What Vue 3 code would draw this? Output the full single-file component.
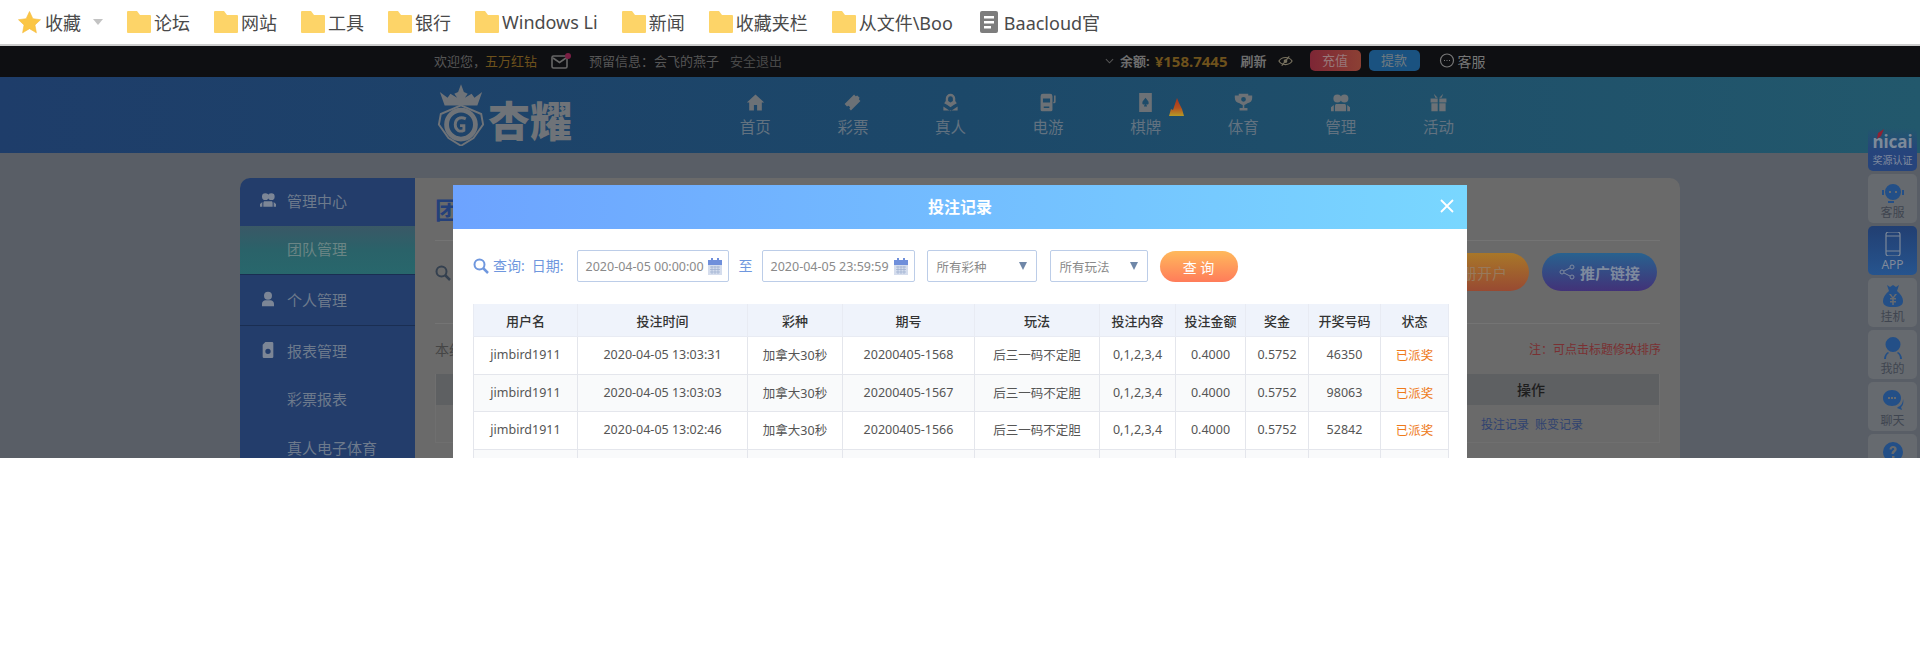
<script setup>
const bookmarks = [
  { label: '论坛' }, { label: '网站' }, { label: '工具' }, { label: '银行' },
  { label: 'Windows Li' }, { label: '新闻' }, { label: '收藏夹栏' }, { label: '从文件\\Boo' },
];

const navItems = [
  { label: '首页', icon: 'home' }, { label: '彩票', icon: 'ticket' },
  { label: '真人', icon: 'live' }, { label: '电游', icon: 'slot' },
  { label: '棋牌', icon: 'card', hot: true }, { label: '体育', icon: 'trophy' },
  { label: '管理', icon: 'team' }, { label: '活动', icon: 'gift' },
];

const sideMenu = [
  { label: '管理中心', icon: 'team', cls: 'h48' },
  { label: '团队管理', cls: 'active' },
  { label: '个人管理', icon: 'user', cls: 'h51 line' },
  { label: '报表管理', icon: 'doc', cls: 'h50' },
  { label: '彩票报表', cls: 'h47' },
  { label: '真人电子体育', cls: 'h50' },
];

const columns = [
  { label: '用户名', width: 104 }, { label: '投注时间', width: 170 },
  { label: '彩种', width: 95 }, { label: '期号', width: 132 },
  { label: '玩法', width: 125 }, { label: '投注内容', width: 76 },
  { label: '投注金额', width: 70 }, { label: '奖金', width: 63 },
  { label: '开奖号码', width: 72 }, { label: '状态', width: 68 },
];

const rows = [
  ['jimbird1911', '2020-04-05 13:03:31', '加拿大30秒', '20200405-1568', '后三一码不定胆', '0,1,2,3,4', '0.4000', '0.5752', '46350', '已派奖'],
  ['jimbird1911', '2020-04-05 13:03:03', '加拿大30秒', '20200405-1567', '后三一码不定胆', '0,1,2,3,4', '0.4000', '0.5752', '98063', '已派奖'],
  ['jimbird1911', '2020-04-05 13:02:46', '加拿大30秒', '20200405-1566', '后三一码不定胆', '0,1,2,3,4', '0.4000', '0.5752', '52842', '已派奖'],
  ['', '', '', '', '', '', '', '', '', ''],
];

const dock = [
  { label: '客服', icon: 'agent' }, { label: 'APP', icon: 'phone', blue: true },
  { label: '挂机', icon: 'bag' }, { label: '我的', icon: 'me' },
  { label: '聊天', icon: 'chat' }, { label: '', icon: 'help' },
];
</script>

<template>
  <div class="app">
    <div class="bookmarks">
      <span class="bm first">
        <svg class="star" viewBox="0 0 24 24"><path d="M12 0.500l3.500 7.500 8 1.100-5.800 5.500 1.500 8.200L12 18.400l-7.200 4.400 1.500-8.200L.5 9.100l8-1.100z" stroke="#f5b93a" stroke-width=".6" stroke-linejoin="round" /></svg>
        收藏
        <i class="caret"></i>
      </span>
      <span v-for="b in bookmarks" :key="b.label" class="bm">
        <svg class="folder" viewBox="0 0 24 22"><path d="M1 0h9l3 4h10a1 1 0 0 1 1 1v16a1 1 0 0 1-1 1H1a1 1 0 0 1-1-1V1a1 1 0 0 1 1-1z" /></svg>
        {{ b.label }}
      </span>
      <span class="bm doc">
        <svg class="docicon" viewBox="0 0 18 22"><rect width="18" height="22" rx="2" fill="#7d7d7d" /><path d="M4 5h10v2.500H4zM4 10h10v2.500H4zM4 15h7v2.500H4z" fill="#fff" /></svg>
        Baacloud官
      </span>
    </div>

    <div class="page">
      <div class="topbar">
        <span>欢迎您，</span><span class="gold name">五万红钻</span>
        <svg class="mail" viewBox="0 0 20 16"><rect x="1" y="3" width="15" height="12" rx="1.500" fill="none" stroke="#666" stroke-width="1.600" /><path d="M2 5l6.500 4.500L15 5" fill="none" stroke="#666" stroke-width="1.600" /><circle cx="17" cy="3" r="3" fill="#7a1f44" /></svg>
        <span class="reserve">预留信息：</span><span>会飞的燕子</span>
        <span class="logout">安全退出</span>
        <div class="top-right">
          <svg class="chev" viewBox="0 0 10 6"><path d="M1 1l4 4 4-4" fill="none" stroke="#555" stroke-width="1.200" /></svg>
          <b class="bal">余额:</b>
          <b class="gold money">¥158.7445</b>
          <b class="bal refresh">刷新</b>
          <svg class="eye" viewBox="0 0 16 12"><path d="M1 6c3-5 11-5 14 0-3 5-11 5-14 0z" fill="none" stroke="#77715f" stroke-width="1.300" /><circle cx="8" cy="6" r="2" fill="#77715f" /><path d="M12 1L4 11" stroke="#77715f" stroke-width="1.300" /></svg>
          <span class="pill red">充值</span>
          <span class="pill blue">提款</span>
          <svg class="chat" viewBox="0 0 16 16"><circle cx="8" cy="7.500" r="6.500" fill="none" stroke="#777" stroke-width="1.200" /><path d="M5 7.500h1M7.500 7.500h1M10 7.500h1" stroke="#777" stroke-width="1.200" /></svg>
          <span class="service">客服</span>
        </div>
      </div>

      <div class="header">
        <div class="logo">
          <svg class="crest" viewBox="0 0 52 64">
            <path d="M26 0l3 8 4 2-3 4 7-4 3 4 8-6-5 14H9L4 8l8 6 3-4 7 4-3-4 4-2z" />
            <path d="M26 22l21 9 2 11-10 14-13 8-13-8L3 42l2-11z" fill="none" stroke-width="2" />
            <circle cx="26" cy="42" r="15" fill="none" stroke-width="5" />
            <path d="M31 36c-6-3-11 0-11 6s5 8 9 6v-5h-4" fill="none" stroke-width="3" />
          </svg>
          <span class="logo-text">杏耀</span>
        </div>
        <nav class="nav">
          <a v-for="n in navItems" :key="n.label" class="nav-item">
            <svg class="nav-icon" viewBox="0 0 24 24">
              <path v-if="n.icon === 'home'" d="M12 2l11 10h-3v10h-6v-7h-4v7H4V12H1z" />
              <path v-else-if="n.icon === 'ticket'" d="M14 2l2 2 2-1 3 3-1 2 2 2-12 12-2-2 1-2-2-2-2 1-3-3z" />
              <path v-else-if="n.icon === 'live'" fill-rule="evenodd" d="M12 1a6 6 0 0 1 6 6v3l2 3-4 2-4 3-4-3-4-2 2-3V7a6 6 0 0 1 6-6zm0 3a3 3 0 0 0-3 3v3l3 2 3-2V7a3 3 0 0 0-3-3zM3 17l9 6 9-6v5H3z" />
              <path v-else-if="n.icon === 'slot'" fill-rule="evenodd" d="M5 1h9a3 3 0 0 1 3 3v17a2 2 0 0 1-2 2H4a2 2 0 0 1-2-2V4a3 3 0 0 1 3-3zm0 6v5h9V7zm1 10v2h7v-2zM19 3h2v8a2 2 0 0 1-2 2h-1v-2h1z" />
              <path v-else-if="n.icon === 'card'" fill-rule="evenodd" d="M4 0h16v24H4zm8 6c-2 3-4 4-4 6.500 0 2 2 2.500 3 1.500l-1 3h4l-1-3c1 1 3 .5 3-1.500C16 10 14 9 12 6z" />
              <path v-else-if="n.icon === 'trophy'" fill-rule="evenodd" d="M6 1h12v2h5v3c0 4-2 6-6 7-1 1-3 2-4 2v4h4v3H7v-3h4v-4c-1 0-3-1-4-2-4-1-6-3-6-7V3h5zm6 4a3 3 0 1 0 0 6 3 3 0 0 0 0-6z" />
              <path v-else-if="n.icon === 'team'" d="M8 2a4.500 4.500 0 0 1 0 10 4.500 4.500 0 0 1 0-10zm9 0a4.500 4.500 0 0 1 0 10 4.500 4.500 0 0 1 0-10zM6 14h12l1 2v7H5v-7zM3.500 15v8H0v-5zM20.500 15L24 18v5h-3.500z" />
              <path v-else d="M2 7h9v5H2zm11 0h9v5h-9zM3 13h8v10H3zm10 0h8v10h-8zM6 1l5 5H8zm12 0l-5 5h3z" />
            </svg>
            <span>{{ n.label }}</span>
            <svg v-if="n.hot" class="flame" viewBox="0 0 15 18"><defs><linearGradient id="fl" x1="0" y1="0" x2="0" y2="1"><stop offset="0" stop-color="#a8321e" /><stop offset=".55" stop-color="#b5501e" /><stop offset="1" stop-color="#b59a26" /></linearGradient></defs><path d="M8 0l2 5 3 6 2 7H0l2-7 2 1z" fill="url(#fl)" /></svg>
          </a>
        </nav>
      </div>

      <div class="content">
        <div class="card">
          <aside class="side">
            <div v-for="m in sideMenu" :key="m.label" class="side-row" :class="m.cls">
              <svg v-if="m.icon" class="side-icon" viewBox="0 0 24 24">
                <path v-if="m.icon === 'team'" d="M8 2a4.500 4.500 0 0 1 0 10 4.500 4.500 0 0 1 0-10zm9 0a4.500 4.500 0 0 1 0 10 4.500 4.500 0 0 1 0-10zM6 14h12l1 2v6H5v-6zM3.500 15v7H0v-4zM20.500 15L24 18v4h-3.500z" />
                <path v-else-if="m.icon === 'user'" d="M12 1a6 6 0 0 1 0 12 6 6 0 0 1 0-12zM3 23v-4c0-3 3-5 5-5h8c2 0 5 2 5 5v4z" />
                <path v-else fill-rule="evenodd" d="M8 0h10a2 2 0 0 1 2 2v20a2 2 0 0 1-2 2H6a2 2 0 0 1-2-2V4zm4 10a4 4 0 1 0 0 8 4 4 0 0 0 0-8z" />
              </svg>
              <span>{{ m.label }}</span>
            </div>
          </aside>
          <section class="main">
            <h2 class="main-title">团队管理</h2>
            <div class="main-tools">
              <svg class="lens" viewBox="0 0 16 16"><circle cx="6.500" cy="6.500" r="5" fill="none" stroke="#34404f" stroke-width="2" /><path d="M10 10l5 5" stroke="#34404f" stroke-width="2.500" /></svg>
              <span class="round orange">注册开户</span>
              <span class="round purple">
                <svg class="share" viewBox="0 0 16 16"><circle cx="3" cy="8" r="2" /><circle cx="13" cy="3" r="2" /><circle cx="13" cy="13" r="2" /><path d="M5 7l6-3M5 9l6 3" /></svg>
                推广链接
              </span>
            </div>
            <div class="main-note">
              <span>本组数据</span>
              <span class="note-red">注：可点击标题修改排序</span>
            </div>
            <div class="bg-table">
              <div class="bg-head">操作</div>
              <div class="bg-row"><a>投注记录</a><a>账变记录</a></div>
            </div>
          </section>
        </div>
      </div>

      <div class="dock">
        <div class="dock-badge">
          <svg class="feather" viewBox="0 0 8 10"><path d="M7 0L1 4 0 10l4-3z" fill="#8e2233" /></svg>
          <span class="nicai">nicai</span>
          <span class="badge-sub">奖源认证</span>
        </div>
        <div v-for="d in dock" :key="d.icon" class="dock-item" :class="{ 'dock-blue': d.blue }">
          <svg class="dock-icon" viewBox="0 0 24 24">
            <path v-if="d.icon === 'agent'" fill-rule="evenodd" d="M12 4a8 8 0 0 1 8 8 8 8 0 0 1-8 8 8 8 0 0 1-8-8 8 8 0 0 1 8-8zM8 11v2h2v-2zm6 0v2h2v-2zM1 10h2v5H1zm20 0h2v5h-2zM7 21h6v2H7z" />
            <g v-else-if="d.icon === 'phone'" class="phone-line"><rect x="5" y="0" width="14" height="24" rx="2.500" /><path d="M5 4h14M5 19h14" /></g>
            <path v-else-if="d.icon === 'bag'" fill-rule="evenodd" d="M6 1l3 2 3-2 3 2 3-2-2 6c4 3 6 7 6 10 0 4-3 6-10 6S2 21 2 17c0-3 2-7 6-10zm2 9l3 4H9v1.500h2.200V17H9v1.500h2.200V21h1.600v-2.500H15V17h-2.200v-1.500H15V14h-2l3-4h-2l-2 3-2-3z" />
            <path v-else-if="d.icon === 'me'" d="M12 1a7.500 7.500 0 0 1 0 15 7.500 7.500 0 0 1 0-15zM3 23c0-3 2-6 4-7l1 1c-2 1-3 3-3 6zM21 23c0-3-2-6-4-7l-1 1c2 1 3 3 3 6z" />
            <path v-else-if="d.icon === 'chat'" fill-rule="evenodd" d="M11 2c5 0 9 3.500 9 8s-4 8-9 8S2 14.500 2 10s4-8 9-8zM7 9v2h2V9zm3 0v2h2V9zm3 0v2h2V9zM22 11c1 3 0 7-2 8l1 3-5-2 1-1c3-1 5-4 5-8z" />
            <path v-else fill-rule="evenodd" d="M12 2a10 10 0 1 1 0 20 10 10 0 0 1 0-20zm-1 14v2.500h2.500V16zM8.500 9.500h2.300c0-1 .5-1.500 1.200-1.500s1.200.4 1.200 1.100c0 1.400-2.700 1.700-2.700 5h2.400c0-2 2.800-2.500 2.800-5.200C15.700 7 14.200 6 12 6s-3.500 1.300-3.500 3.500z" />
          </svg>
          <span>{{ d.label }}</span>
        </div>
      </div>

      <div class="modal">
        <div class="modal-head">
          <span>投注记录</span>
          <svg class="close" viewBox="0 0 14 14"><path d="M1 1l12 12M13 1L1 13" stroke="#fff" stroke-width="1.800" /></svg>
        </div>
        <div class="filters">
          <svg class="f-lens" viewBox="0 0 16 16"><circle cx="6.500" cy="6.500" r="5" fill="none" stroke="#6f97de" stroke-width="2" /><path d="M10 10l5 5" stroke="#6f97de" stroke-width="2.500" /></svg>
          <span class="f-label q">查询:</span>
          <span class="f-label d">日期:</span>
          <div class="field date">
            <span>2020-04-05 00:00:00</span>
            <svg class="cal" viewBox="0 0 14 17"><rect y="2" width="14" height="15" fill="#d5dded" /><rect y="2" width="14" height="5" fill="#6f8fdb" /><path d="M3 0h2v4H3zM9 0h2v4H9z" fill="#6f8fdb" /><path d="M2 9h10M2 11.500h10M2 14h10M4 8v8M7 8v8M10 8v8" stroke="#9fb0d0" stroke-width=".7" /></svg>
          </div>
          <span class="f-label to">至</span>
          <div class="field date end">
            <span>2020-04-05 23:59:59</span>
            <svg class="cal" viewBox="0 0 14 17"><rect y="2" width="14" height="15" fill="#d5dded" /><rect y="2" width="14" height="5" fill="#6f8fdb" /><path d="M3 0h2v4H3zM9 0h2v4H9z" fill="#6f8fdb" /><path d="M2 9h10M2 11.500h10M2 14h10M4 8v8M7 8v8M10 8v8" stroke="#9fb0d0" stroke-width=".7" /></svg>
          </div>
          <div class="field sel s1"><span>所有彩种</span><i class="tri"></i></div>
          <div class="field sel s2"><span>所有玩法</span><i class="tri"></i></div>
          <button class="query">查 询</button>
        </div>
        <table class="records">
          <colgroup><col v-for="c in columns" :key="c.label" :style="{ width: c.width + 'px' }" /></colgroup>
          <thead><tr><th v-for="c in columns" :key="c.label">{{ c.label }}</th></tr></thead>
          <tbody>
            <tr v-for="(r, i) in rows" :key="i">
              <td v-for="(cell, j) in r" :key="j" :class="{ paid: j === 9 }">{{ cell }}</td>
            </tr>
          </tbody>
        </table>
      </div>
    </div>
  </div>
</template>

<style scoped>
.app {
  min-height: 648px;
  background: #fff;
  font-family: "Noto Sans", "Noto Sans CJK SC", sans-serif;
}

/* bookmarks bar */
.bookmarks {
  height: 44px;
  border-bottom: 2px solid #ccc;
  display: flex;
  align-items: center;
  padding-left: 18px;
  font-size: 18px;
  color: #4a4a4a;
  white-space: nowrap;
}
.bm {
  display: flex;
  align-items: center;
  gap: 3px;
  margin-right: 24px;
}
.first { gap: 4px; }
.doc { margin-left: 3px; gap: 6px; }
.star { width: 23px; height: 23px; fill: #fbc645; }
.caret {
  width: 0;
  height: 0;
  margin-left: 8px;
  border: 5px solid transparent;
  border-top: 6px solid #c3c3c3;
  border-bottom: 0;
}
.folder { width: 24px; height: 22px; fill: #fdd468; }
.docicon { width: 18px; height: 22px; }

.page {
  position: relative;
  height: 412px;
  overflow: hidden;
  background: #595e66;
}

/* top strip */
.topbar {
  height: 31px;
  padding: 0 0 2px 434px;
  box-sizing: border-box;
  background: #0e0f12;
  display: flex;
  align-items: center;
  font-size: 13px;
  color: #565656;
  white-space: nowrap;
}
.gold { color: #6e521c; }
.name { margin-left: -1px; }
.mail { width: 20px; height: 16px; margin-left: 14px; }
.reserve { margin-left: 18px; }
.logout { margin-left: 11px; color: #484848; }
.top-right {
  position: absolute;
  top: 4px;
  left: 1105px;
  height: 21px;
  display: flex;
  align-items: center;
}
.chev { width: 9px; height: 6px; margin-right: 6px; }
.bal { color: #6d6d6d; font-size: 13px; }
.money { margin-left: 5px; font-size: 15px; }
.refresh { margin-left: 13px; }
.eye { width: 15px; height: 12px; margin-left: 11px; }
.pill {
  width: 51px;
  height: 21px;
  margin-left: 8px;
  border-radius: 5px;
  color: #6f7a80;
  font-size: 13px;
  line-height: 21px;
  text-align: center;
}
.pill.red { margin-left: 17px; background: linear-gradient(90deg, #7d2635, #8c4034); color: #98787a; }
.pill.blue { background: #1a5280; }
.chat { width: 16px; height: 16px; margin-left: 19px; }
.service { margin-left: 3px; color: #777; font-size: 14px; }

/* main header */
.header {
  height: 76px;
  background: linear-gradient(90deg, #1e3d6a, #1c4869 50%, #22586c);
  display: flex;
  align-items: center;
  padding-left: 436px;
}
.logo {
  width: 270.500px;
  display: flex;
  align-items: center;
  gap: 2px;
}
.crest { width: 50px; height: 62px; fill: #6f7378; stroke: #6f7378; stroke-width: 0; }
.logo-text {
  margin-top: 12px;
  font-size: 42px;
  line-height: 42px;
  font-weight: 900;
  color: #6f7378;
}
.nav { display: flex; }
.nav-item {
  position: relative;
  width: 97.600px;
  height: 76px;
  display: flex;
  flex-direction: column;
  align-items: center;
  padding-top: 16px;
  box-sizing: border-box;
  gap: 4px;
  font-size: 15.500px;
  line-height: 22px;
  color: #627280;
}
.nav-icon { width: 19px; height: 19px; fill: #6c7176; }
.flame { position: absolute; top: 21px; left: 72px; width: 15px; height: 18px; }

/* page body */
.content { padding: 25px 240px 0; }
.card {
  display: flex;
  height: 300px;
  background: #6a6a6a;
  border-radius: 10px 10px 0 0;
  overflow: hidden;
}
.side {
  width: 175px;
  flex: none;
  background: #233d6b;
  font-size: 15px;
  color: #6d7a8c;
}
.side-row {
  height: 48px;
  display: flex;
  align-items: center;
  padding: 0 0 2px 20px;
  box-sizing: border-box;
  gap: 11px;
}
.side-row span:first-child { margin-left: 27px; }
.h48 { height: 48px; padding-bottom: 4px; }
.h51 { height: 51px; }
.h50 { height: 50px; }
.h47 { height: 47px; }
.line { border-bottom: 1px solid #1a2e52; }
.active {
  height: 49px;
  padding-bottom: 4px;
  background: linear-gradient(180deg, #3a5866, #2a6269 50%, #28676c);
  border-bottom: 1px solid #1a2e52;
  color: #6a8585;
}
.side-icon { width: 16px; height: 16px; fill: #7c8696; }

.main { flex: 1; padding: 0 20px; }
.main-title {
  height: 63px;
  margin: 0;
  box-sizing: border-box;
  border-bottom: 1px solid #747474;
  padding-top: 16px;
  font-size: 24px;
  line-height: 32px;
  color: #24407a;
}
.main-tools {
  height: 83px;
  box-sizing: border-box;
  border-bottom: 1px solid #747474;
  padding: 12px 3px 0 0;
  display: flex;
  justify-content: flex-end;
  gap: 13px;
  position: relative;
}
.lens { position: absolute; left: 0; top: 24px; width: 16px; height: 16px; }
.round {
  width: 115px;
  height: 38px;
  box-sizing: border-box;
  border-radius: 19px;
  display: flex;
  align-items: center;
  justify-content: center;
  gap: 5px;
  font-size: 15px;
  font-weight: 700;
  color: #7e8a9e;
}
.orange {
  justify-content: flex-end;
  padding-right: 22px;
  background: linear-gradient(180deg, #a87729, #984a32);
  color: #987a5c;
  font-weight: 400;
}
.purple { background: linear-gradient(180deg, #28628f, #423278); }
.share { width: 16px; height: 16px; fill: none; stroke: #7e8a9e; stroke-width: 1; }
.main-note {
  height: 50px;
  display: flex;
  justify-content: space-between;
  align-items: center;
  font-size: 14px;
  color: #454545;
}
.note-red { font-size: 12px; color: #7a3032; margin-right: -1px; }
.bg-table { border: 1px solid #6f6f6f; border-top: 0; height: 69px; box-sizing: border-box; }
.bg-head {
  height: 31px;
  background: #5e6062;
  color: #1d1d1d;
  font-size: 14px;
  line-height: 31px;
  font-weight: 500;
  padding-left: 1081px;
}
.bg-row {
  height: 37px;
  display: flex;
  gap: 6px;
  align-items: center;
  padding-left: 1045px;
  font-size: 12px;
  color: #2f4270;
}

/* right dock */
.dock {
  position: absolute;
  top: 82px;
  left: 1868px;
  width: 49px;
  display: flex;
  flex-direction: column;
  gap: 3px;
  font-size: 12px;
  color: #3f4550;
}
.dock-badge {
  position: relative;
  height: 43px;
  border-radius: 5px;
  background: linear-gradient(180deg, transparent, #26447c 55%);
  display: flex;
  flex-direction: column;
  align-items: center;
}
.feather { position: absolute; top: 1px; left: 9px; width: 8px; height: 10px; }
.nicai { margin-top: 3px; font-size: 17px; line-height: 22px; font-weight: 700; color: #7d8a9a; }
.badge-sub { font-size: 10px; line-height: 14px; color: #808a9e; }
.dock-item {
  height: 49px;
  border-radius: 5px;
  background: #666a6f;
  display: flex;
  flex-direction: column;
  align-items: center;
  box-sizing: border-box;
  padding-top: 6px;
  gap: 1px;
  line-height: 16px;
}
.dock-icon { width: 24px; height: 24px; fill: #234f87; flex: none; }
.dock-blue { background: linear-gradient(180deg, #223f72, #26548e); color: #808a9a; }
.phone-line { fill: none; stroke: #7c8898; stroke-width: 1.200; }

/* records dialog */
.modal {
  position: absolute;
  top: 139px;
  left: 453px;
  width: 1014px;
  height: 400px;
  background: #fff;
}
.modal-head {
  position: relative;
  height: 44px;
  background: linear-gradient(90deg, #6da3ff, #79d7ff);
  color: #fff;
  font-size: 16px;
  font-weight: 700;
  line-height: 44px;
  text-align: center;
}
.close { position: absolute; right: 13px; top: 14px; width: 14px; height: 14px; }
.filters {
  height: 75px;
  padding: 21px 0 0 20px;
  box-sizing: border-box;
  display: flex;
  align-items: flex-start;
}
.f-lens { width: 16px; height: 16px; margin-top: 8px; }
.f-label { font-size: 14px; line-height: 32px; color: #6f97de; }
.q { margin-left: 4px; }
.d { margin-left: 7px; }
.to { margin: 0 9px 0 10px; }
.field {
  height: 32px;
  box-sizing: border-box;
  border: 1px solid #bccde8;
  border-radius: 2px;
  display: flex;
  align-items: center;
  justify-content: space-between;
  padding: 0 6px 0 8px;
  font-size: 12.500px;
  color: #8a8a8a;
  white-space: nowrap;
}
.date { width: 152px; margin-left: 13px; }
.date.end { width: 153px; margin-left: 0; }
.cal { width: 14px; height: 17px; flex: none; }
.sel { margin-left: 12px; padding: 0 9px; }
.s1 { width: 110px; }
.s2 { width: 98px; margin-left: 13px; }
.tri {
  width: 0;
  height: 0;
  border: 4.500px solid transparent;
  border-top: 8px solid #6f87a8;
  border-bottom: 0;
}
.query {
  width: 78px;
  height: 31px;
  margin-left: 12px;
  margin-top: 1px;
  border: 0;
  border-radius: 16px;
  background: linear-gradient(180deg, #ffb95c, #ff7c5a);
  color: #fff;
  font: 14px "Noto Sans", "Noto Sans CJK SC", sans-serif;
}
.records {
  margin-left: 20px;
  width: 975px;
  table-layout: fixed;
  border-collapse: collapse;
  font-size: 12.500px;
  color: #555;
  text-align: center;
}
.records th {
  height: 32px;
  padding: 0;
  background: #eff3fb;
  border: 1px solid #e8ebf3;
  border-top: 0;
  color: #333;
  font-size: 13px;
  font-weight: 500;
}
.records td {
  height: 37.700px;
  padding: 0 0 2px;
  box-sizing: border-box;
  border: 1px solid #e4e6ec;
  white-space: nowrap;
}
.records tbody tr:nth-child(even) td { background: #f9fafb; }
.records td.paid { color: #ee7a1a; }
</style>

<style>
body { background: #fff; }
</style>
